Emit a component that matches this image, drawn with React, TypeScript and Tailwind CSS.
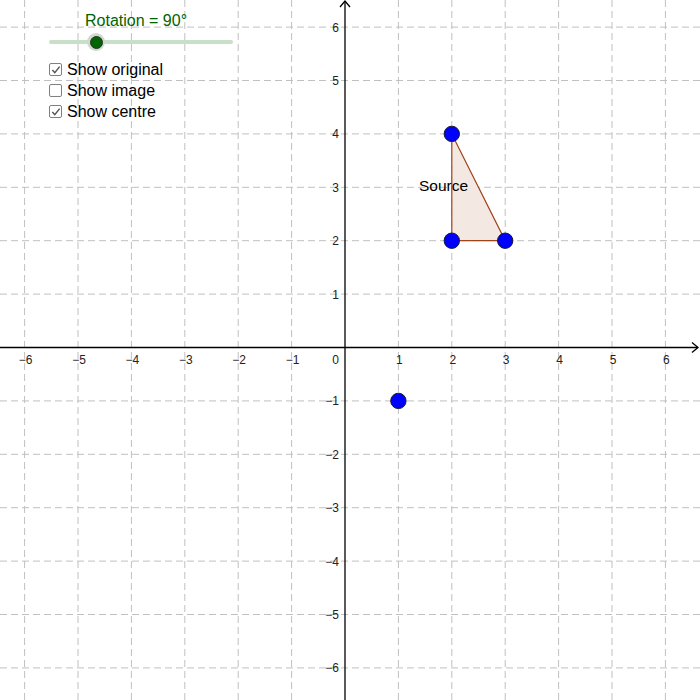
const OX = 345;
const OY = 347.5;
const S = 53.4;

const px = (x: number) => OX + x * S;
const py = (y: number) => OY - y * S;

const ticks = [-6, -5, -4, -3, -2, -1, 1, 2, 3, 4, 5, 6];
const fmt = (n: number) => (n < 0 ? "\u2212" + Math.abs(n) : String(n));

function Graph() {
  return (
    <svg width="700" height="700" viewBox="0 0 700 700" className="block">
      {/* grid */}
      <g stroke="#c0c0c0" strokeWidth="1" strokeDasharray="7 4">
        {ticks.map((t) => (
          <line key={"v" + t} x1={px(t)} y1={0} x2={px(t)} y2={700} />
        ))}
        {ticks.map((t) => (
          <line key={"h" + t} x1={0} y1={py(t)} x2={700} y2={py(t)} />
        ))}
      </g>

      {/* axes */}
      <g stroke="#000" strokeWidth="1.3" fill="none">
        <line x1={0} y1={OY} x2={698} y2={OY} />
        <line x1={OX} y1={1} x2={OX} y2={700} />
        <polyline points={`${692},${OY - 5} ${698},${OY} ${692},${OY + 5}`} />
        <polyline points={`${OX - 5},${7} ${OX},${1} ${OX + 5},${7}`} />
      </g>

      {/* axis labels */}
      <g fontFamily="'Liberation Sans', Arial, sans-serif" fontSize="12" fill="#222">
        {ticks.map((t) => (
          <text key={"xl" + t} x={px(t) + 1} y={364} textAnchor="middle">
            {fmt(t)}
          </text>
        ))}
        {ticks.map((t) => (
          <text key={"yl" + t} x={339} y={py(t) + 4.5} textAnchor="end">
            {fmt(t)}
          </text>
        ))}
        <text x={339} y={364} textAnchor="end">
          0
        </text>
      </g>

      {/* triangle */}
      <polygon
        points={`${px(2)},${py(4)} ${px(2)},${py(2)} ${px(3)},${py(2)}`}
        fill="#f3e8e2"
        stroke="#a0421a"
        strokeWidth="1.2"
      />
      <text
        x={419}
        y={191}
        fontFamily="'Liberation Sans', Arial, sans-serif"
        fontSize="15.5"
        fill="#000"
      >
        Source
      </text>

      {/* points */}
      <g fill="#0000ff" stroke="#1a1a33" strokeWidth="1">
        <circle cx={px(2)} cy={py(4)} r="7.7" />
        <circle cx={px(2)} cy={py(2)} r="7.7" />
        <circle cx={px(3)} cy={py(2)} r="7.7" />
        <circle cx={px(1)} cy={py(-1)} r="7.7" />
      </g>
    </svg>
  );
}

function Check({ checked, label }: { checked: boolean; label: string }) {
  return (
    <div className="flex items-center gap-[5px] h-[21px]">
      <span className="w-[13px] h-[13px] rounded-[2px] border-[1.5px] border-[#808080] bg-white flex items-center justify-center">
        {checked && (
          <svg width="10" height="10" viewBox="0 0 11 11">
            <polyline points="1.5,5.5 4.2,8.5 9.5,1.8" fill="none" stroke="#555" strokeWidth="1.6" />
          </svg>
        )}
      </span>
      <span className="text-[16px] leading-none text-black">{label}</span>
    </div>
  );
}

export default function App() {
  return (
    <div
      className="relative w-[700px] h-[700px] bg-white overflow-hidden"
      style={{ fontFamily: "'Liberation Sans', Arial, sans-serif" }}
    >
      <Graph />

      {/* slider + checkboxes overlay */}
      <div className="absolute left-[49px] top-[11px] flex flex-col">
        <div className="pl-[36px] text-[16px] leading-[20px] text-[#006400]">Rotation = 90°</div>
        <div className="relative w-[184px] h-[22px] flex items-center">
          <div className="w-full h-[4px] rounded-full bg-[#c8dfc8]" />
          <div className="absolute left-[38px] top-[2px] w-[18px] h-[18px] rounded-full bg-[#d0d8d0] flex items-center justify-center">
            <div className="w-[13px] h-[13px] rounded-full bg-[#006400] border border-[#1f3a1f]" />
          </div>
        </div>
        <div className="mt-[6px] flex flex-col">
          <Check checked label="Show original" />
          <Check checked={false} label="Show image" />
          <Check checked label="Show centre" />
        </div>
      </div>
    </div>
  );
}
